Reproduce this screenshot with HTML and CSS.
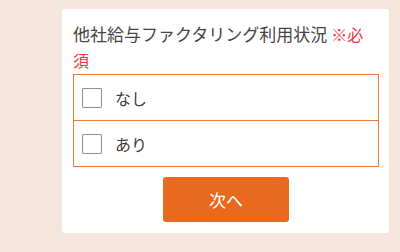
FILE: index.html
```html
<!DOCTYPE html>
<html lang="ja">
<head>
<meta charset="utf-8">
<link rel="stylesheet" href="styles.css">
</head>
<body>
<div class="page">
  <div class="card">
    <div class="title">他社給与ファクタリング利用状況 <span class="req">※必須</span></div>
    <div class="options">
      <label class="opt"><span class="box"></span><span class="txt">なし</span></label>
      <label class="opt"><span class="box"></span><span class="txt">あり</span></label>
    </div>
    <div class="actions"><button class="next">次へ</button></div>
  </div>
</div>
</body>
</html>
```
FILE: styles.css
```css
html, body {
  margin: 0;
  padding: 0;
  background: #f4e6dc;
  font-family: "Noto Sans CJK JP", "Noto Sans", sans-serif;
}
.page {
  padding: 9px 11px 0 62px;
  height: 252px;
  box-sizing: border-box;
}
.card {
  background: #ffffff;
  border-radius: 3px;
  padding: 12px 10px 11px 11px;
  box-sizing: border-box;
  width: 327px;
}
.title {
  font-size: 17px;
  line-height: 26px;
  color: #444444;
  padding-right: 3px;
  margin-bottom: 1px;
}
.req {
  color: #fa3443;
  font-size: 16px;
}
.options {
  border: 1px solid #ef7b36;
  display: flex;
  flex-direction: column;
}
.opt {
  display: flex;
  align-items: center;
  height: 45px;
  padding-left: 8px;
}
.opt + .opt {
  border-top: 1px solid #ef7b36;
}
.box {
  width: 20px;
  height: 20px;
  box-sizing: border-box;
  border: 1px solid #9c8f8f;
  border-radius: 1px;
  background: #fff;
  box-shadow: inset 0 0 1px #d8d0d0;
}
.txt {
  margin-left: 13px;
  font-size: 16px;
  color: #3c3c3c;
}
.actions {
  display: flex;
  justify-content: center;
  margin-top: 10px;
}
.next {
  width: 126px;
  height: 45px;
  border: none;
  border-radius: 3px;
  background: #e9691f;
  color: #ffffff;
  font-family: "Noto Sans CJK JP", "Noto Sans", sans-serif;
  font-size: 17px;
  padding: 0;
}
```
